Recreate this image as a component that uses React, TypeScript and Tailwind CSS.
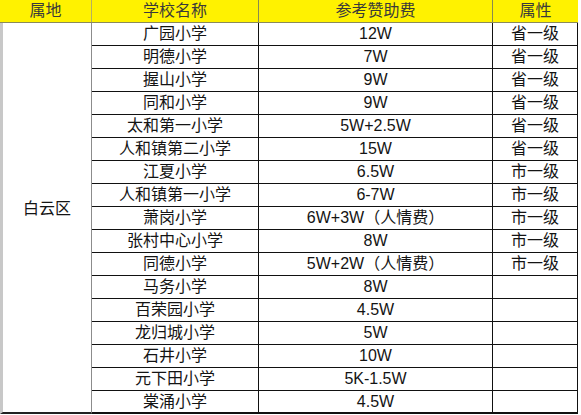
import React from "react";

const rows: [string, string, string][] = [
  ["广园小学", "12W", "省一级"],
  ["明德小学", "7W", "省一级"],
  ["握山小学", "9W", "省一级"],
  ["同和小学", "9W", "省一级"],
  ["太和第一小学", "5W+2.5W", "省一级"],
  ["人和镇第二小学", "15W", "省一级"],
  ["江夏小学", "6.5W", "市一级"],
  ["人和镇第一小学", "6-7W", "市一级"],
  ["萧岗小学", "6W+3W（人情费）", "市一级"],
  ["张村中心小学", "8W", "市一级"],
  ["同德小学", "5W+2W（人情费）", "市一级"],
  ["马务小学", "8W", ""],
  ["百荣园小学", "4.5W", ""],
  ["龙归城小学", "5W", ""],
  ["石井小学", "10W", ""],
  ["元下田小学", "5K-1.5W", ""],
  ["棠涌小学", "4.5W", ""],
];

export default function App() {
  return (
    <div
      className="w-[581px] h-[415px] bg-white overflow-hidden text-[#141414] text-[16px]"
      style={{ fontFamily: '"Liberation Sans", "Noto Sans CJK SC", sans-serif' }}
    >
      <div className="flex w-[578px] h-[23px] bg-[#fff200] border-b border-[#8a8a5a] text-[#3a3a3a]">
        <div className="w-[92px] flex items-center justify-center border-r border-[#b5b060]">属地</div>
        <div className="w-[167px] flex items-center justify-center border-r border-[#8a8a50]">学校名称</div>
        <div className="w-[234px] flex items-center justify-center border-r border-[#8a8a50]">参考赞助费</div>
        <div className="flex-1 flex items-center justify-center">属性</div>
      </div>
      <div className="flex w-[578px]">
        <div className="w-[92px] h-[391px] border-l-[3px] border-l-[#c8c8c8] border-r border-r-[#8c8c8c] border-b-2 border-b-[#222] flex items-center justify-center pb-[18px]">
          白云区
        </div>
        <div className="flex-1 flex flex-col">
          {rows.map(([name, fee, level], i) => (
            <div
              key={i}
              className={`flex h-[23px] ${i === rows.length - 1 ? "border-b-2" : "border-b-[1.5px]"} border-[#111]`}
            >
              <div className="w-[167px] flex items-center justify-center border-r-[1.5px] border-[#111] whitespace-nowrap">
                {name}
              </div>
              <div className="w-[234px] flex items-center justify-center border-r-[1.5px] border-[#111] whitespace-nowrap">
                {fee}
              </div>
              <div className="flex-1 flex items-center justify-center border-r-[1.5px] border-[#111] whitespace-nowrap">
                {level}
              </div>
            </div>
          ))}
        </div>
      </div>
    </div>
  );
}
